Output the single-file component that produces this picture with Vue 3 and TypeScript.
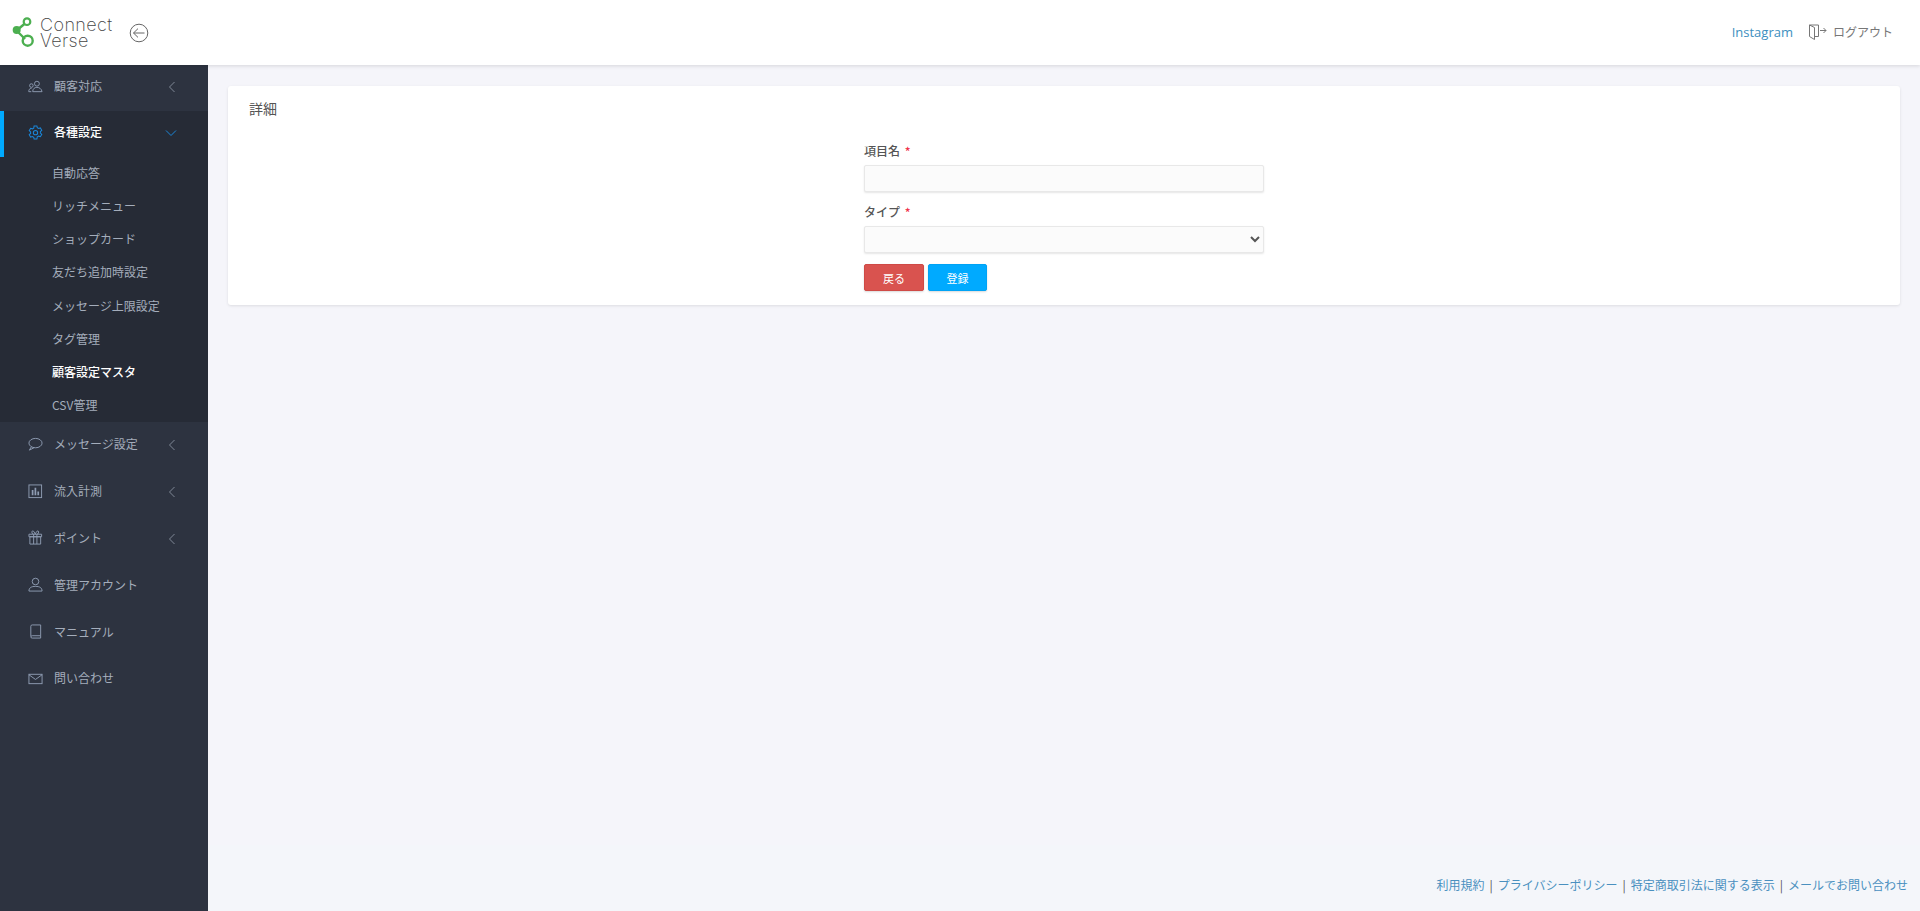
<script setup lang="ts">
const subItems: { label: string; active?: boolean }[] = [
  { label: '自動応答' },
  { label: 'リッチメニュー' },
  { label: 'ショップカード' },
  { label: '友だち追加時設定' },
  { label: 'メッセージ上限設定' },
  { label: 'タグ管理' },
  { label: '顧客設定マスタ', active: true },
  { label: 'CSV管理' },
]
const footerLinks = ['利用規約', 'プライバシーポリシー', '特定商取引法に関する表示', 'メールでお問い合わせ']
</script>

<template>
  <div class="page">
    <header class="topbar">
      <div class="brand">
        <svg class="logo" width="26" height="34" viewBox="0 0 26 34" fill="none">
          <path d="M4.500 14.500 13 7.500M4.500 14.500 13 23" stroke="#4caf50" stroke-width="2.400" />
          <circle cx="4.700" cy="14" r="4" fill="#4caf50" />
          <circle cx="15" cy="5.700" r="3.300" stroke="#4caf50" stroke-width="2.200" />
          <circle cx="15.700" cy="24.700" r="5" stroke="#4caf50" stroke-width="2.400" />
        </svg>
        <div class="brand-name">Connect<br />Verse</div>
        <svg class="back" width="20" height="20" viewBox="0 0 20 20" fill="none" stroke="#666" stroke-width="1">
          <circle cx="10" cy="10" r="8.800" />
          <path d="M15.500 10H4.500M9 5.600 4.500 10 9 14.400" />
        </svg>
      </div>
      <div class="top-right">
        <a class="insta">Instagram</a>
        <span class="logout">
          <svg width="19" height="18" viewBox="0 0 19 18" fill="none" stroke="#777" stroke-width="1">
            <path d="M10.500 2H1.500V13.500L6.500 16.500V4.500L1.500 2M10.500 2V13.500H6.500" />
            <path d="M12 7.500H18M15.500 5 18 7.500 15.500 10" />
          </svg>
          ログアウト
        </span>
      </div>
    </header>

    <div class="body">
      <aside class="sidebar">
        <div class="nav-row">
          <svg class="nav-icon" viewBox="0 0 16 16" fill="none" stroke="currentColor">
            <circle cx="9.500" cy="5" r="2.600" /><circle cx="3.600" cy="7" r="1.900" />
            <path d="M5 13.500c0-3 2-4.600 4.500-4.600s5 1.600 5.500 4.600ZM3.500 13.500H.8c0-2 .8-3.600 3-3.600" />
          </svg>
          <span class="nav-label">顧客対応</span>
          <svg class="chev" viewBox="0 0 8 12" fill="none" stroke="currentColor"><path d="M6.500 1 1.500 6l5 5" /></svg>
        </div>

        <div class="nav-open">
          <div class="nav-row current">
            <svg class="nav-icon gear" viewBox="0 0 16 16" fill="none" stroke="currentColor" stroke-width="1.100">
              <path d="M6.500 1h3l.4 1.900 1.400.8 1.900-.6 1.500 2.600-1.500 1.300v1.600l1.500 1.300-1.500 2.600-1.900-.6-1.400.8L9.500 15h-3l-.4-1.900-1.400-.8-1.900.6L1.300 10.300 2.800 9V7.400L1.300 6.100l1.500-2.600 1.900.6 1.400-.8Z" />
              <circle cx="8" cy="8.200" r="2.300" />
            </svg>
            <span class="nav-label">各種設定</span>
            <svg class="chev-down" viewBox="0 0 12 8" fill="none" stroke="currentColor"><path d="M1 1.500 6 6.500l5-5" /></svg>
          </div>
          <ul class="sub">
            <li v-for="item in subItems" :key="item.label" :class="{ active: item.active }">{{ item.label }}</li>
          </ul>
        </div>

        <div class="nav-row">
          <svg class="nav-icon" viewBox="0 0 16 16" fill="none" stroke="currentColor">
            <ellipse cx="8" cy="6.500" rx="7" ry="5" /><path d="M3.500 10.500 1.500 14l5-2.600" />
          </svg>
          <span class="nav-label">メッセージ設定</span>
          <svg class="chev" viewBox="0 0 8 12" fill="none" stroke="currentColor"><path d="M6.500 1 1.500 6l5 5" /></svg>
        </div>
        <div class="nav-row">
          <svg class="nav-icon" viewBox="0 0 16 16" fill="none" stroke="currentColor">
            <rect x="1" y="1" width="13.500" height="13.500" />
            <path d="M4 12V6.500h1.800V12ZM7 12V4h1.800v8ZM10 12V8h1.800v4Z" fill="currentColor" stroke="none" />
          </svg>
          <span class="nav-label">流入計測</span>
          <svg class="chev" viewBox="0 0 8 12" fill="none" stroke="currentColor"><path d="M6.500 1 1.500 6l5 5" /></svg>
        </div>
        <div class="nav-row">
          <svg class="nav-icon" viewBox="0 0 16 16" fill="none" stroke="currentColor">
            <path d="M1 4.500h13.500v2.700H1ZM2 7.200h11.500V15H2ZM6 4.500V15M9.500 4.500V15" />
            <path d="M6 4.500C4 4.500 3.500 1 5 1s2 2 2.700 3.500C8.500 3 9 1 10.500 1s1 3.500-1 3.500" />
          </svg>
          <span class="nav-label">ポイント</span>
          <svg class="chev" viewBox="0 0 8 12" fill="none" stroke="currentColor"><path d="M6.500 1 1.500 6l5 5" /></svg>
        </div>
        <div class="nav-row">
          <svg class="nav-icon" viewBox="0 0 16 16" fill="none" stroke="currentColor">
            <circle cx="8" cy="4.800" r="3.500" />
            <path d="M1 15c0-3.500 2.500-5 7-5s7 1.500 7 5Z" />
          </svg>
          <span class="nav-label">管理アカウント</span>
        </div>
        <div class="nav-row">
          <svg class="nav-icon" viewBox="0 0 16 16" fill="none" stroke="currentColor">
            <path d="M3 13V2.500C3 1.500 3.500 1 4.500 1h9v11.500H4.500C3.500 12.500 3 13 3 13.800S3.500 15 4.500 15h9v-2.500" />
          </svg>
          <span class="nav-label">マニュアル</span>
        </div>
        <div class="nav-row">
          <svg class="nav-icon" viewBox="0 0 16 16" fill="none" stroke="currentColor">
            <rect x="1" y="3.500" width="14" height="10" /><path d="M1 4l7 5 7-5" />
          </svg>
          <span class="nav-label">問い合わせ</span>
        </div>
      </aside>

      <main class="main">
        <section class="card">
          <h2 class="card-title">詳細</h2>
          <form class="form" @submit.prevent>
            <div class="field">
              <label>項目名 <em>*</em></label>
              <input type="text" />
            </div>
            <div class="field">
              <label>タイプ <em>*</em></label>
              <select><option></option></select>
            </div>
            <div class="actions">
              <button type="button" class="btn red">戻る</button>
              <button type="submit" class="btn blue">登録</button>
            </div>
          </form>
        </section>
        <footer class="footer">
          <template v-for="(link, i) in footerLinks" :key="link">
            <span v-if="i > 0" class="sep">|</span>
            <a>{{ link }}</a>
          </template>
        </footer>
      </main>
    </div>
  </div>
</template>

<style>
html, body { margin: 0; padding: 0; }
</style>

<style scoped>
.page {
  height: 911px;
  display: flex;
  flex-direction: column;
  overflow: hidden;
  font-family: "Noto Sans CJK JP", "Open Sans", sans-serif;
  font-size: 12px;
  color: #555;
  background: #f5f5fa;
}
.topbar {
  height: 65px;
  flex: none;
  background: #fff;
  display: flex;
  align-items: center;
  justify-content: space-between;
  box-shadow: 0 1px 4px rgba(0, 0, 0, 0.13);
  position: relative;
  z-index: 2;
}
.brand { display: flex; align-items: center; padding-left: 12px; }
.brand-name {
  margin-left: 2px;
  font-family: "Inter", sans-serif;
  font-weight: 200;
  font-size: 18px;
  line-height: 16px;
  color: #444;
  letter-spacing: 0.4px;
}
.back { margin-left: 16px; }
.top-right { display: flex; align-items: center; padding-right: 27px; margin-top: -2px; }
.insta { font-family: "Open Sans", sans-serif; color: #3d8fc0; font-size: 13px; }
.logout { display: flex; align-items: center; gap: 6px; margin-left: 15px; color: #777; font-size: 12px; }
.body { flex: 1; display: flex; min-height: 0; }
.sidebar {
  width: 208px;
  flex: none;
  background: #2d3340;
}
.nav-row {
  height: 46.800px;
  box-sizing: border-box;
  padding-bottom: 2px;
  display: flex;
  align-items: center;
  position: relative;
  padding-left: 28px;
  color: #a4adbb;
}
.nav-row:first-child { height: 46px; padding-bottom: 4px; }
.nav-icon { width: 15px; height: 15px; flex: none; color: #8f9db3; }
.nav-label { margin-left: 11px; font-size: 12px; line-height: 1; }
.chev { position: absolute; left: 168px; width: 8px; height: 12px; margin-top: 2px; color: #7f8896; }
.chev-down { position: absolute; left: 165px; width: 12px; height: 8px; margin-top: 2px; color: #1a86d8; }
.nav-open { background: #262b36; }
.current { color: #fff; box-shadow: inset 4px 0 0 #00aaff; }
.current .nav-label { font-weight: 500; }
.gear { color: #1a86d8; }
.sub { list-style: none; margin: 0; padding: 0 0 0 52px; }
.sub li {
  height: 33.130px;
  line-height: 31px;
  font-size: 12px;
  color: #a4adbb;
}
.sub li.active { color: #fff; font-weight: 500; }
.main { flex: 1; display: flex; flex-direction: column; min-width: 0; }
.card {
  margin: 21px 20px 0;
  height: 219px;
  box-sizing: border-box;
  background: #fff;
  border-radius: 3px;
  box-shadow: 0 1px 3px rgba(0, 0, 0, 0.1);
  padding: 12px 21px 0;
}
.card-title { margin: 0; font-size: 14px; font-weight: 400; line-height: 20px; color: #555; }
.form { width: 400px; margin: 24px auto 0; }
.field { margin-bottom: 11px; }
.field label { display: block; font-size: 12px; font-weight: 500; line-height: 18px; color: #555; margin-bottom: 5px; }
.field em { font-style: normal; color: #f0324b; margin-left: 2px; }
.field input, .field select {
  display: block;
  width: 100%;
  box-sizing: border-box;
  height: 27px;
  border: 1px solid #e8e8e8;
  background: #fbfbfb;
  color: #555;
  border-radius: 2px;
  box-shadow: 0 1px 2px rgba(0, 0, 0, 0.1);
  outline: none;
}
.actions { display: flex; gap: 4px; margin-top: 11px; }
.btn {
  height: 27px;
  border-radius: 2px;
  color: #fff;
  font-family: inherit;
  font-size: 11px;
  padding: 0;
  box-shadow: 0 1px 2px rgba(0, 0, 0, 0.15);
}
.red { width: 60px; background: #d9534f; border: 1px solid #cf4a46; }
.blue { width: 59px; background: #00aaff; border: 1px solid #00a3f5; }
.footer {
  margin-top: auto;
  height: 66px;
  box-sizing: border-box;
  padding: 13px 12px 0 0;
  display: flex;
  justify-content: flex-end;
  align-items: center;
  background: #f4f6fa;
  color: #4a90bf;
  font-size: 12px;
}
.sep { margin: 0 5px; color: #555; }
</style>
